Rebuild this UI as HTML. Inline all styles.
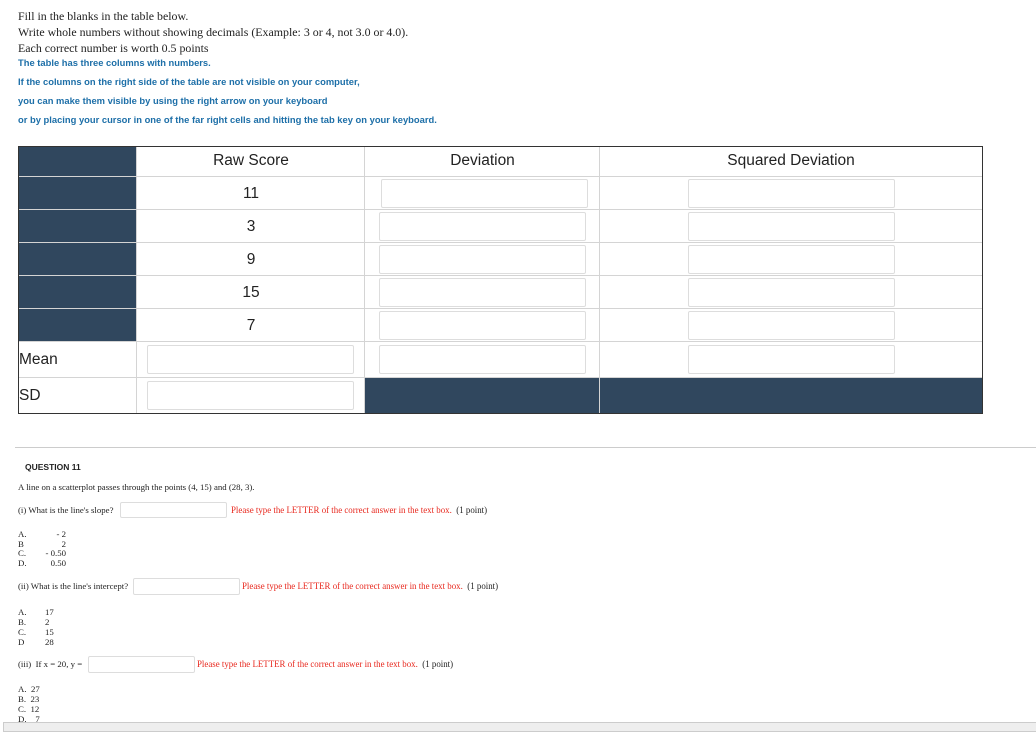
<!DOCTYPE html>
<html><head><meta charset="utf-8"><style>
body{margin:0;width:1036px;height:730px;position:relative;background:#fff;overflow:hidden;font-family:"Liberation Serif",serif;color:#222}
.a{position:absolute;white-space:nowrap}
.s{font-size:11.9px}
.b{font-family:"Liberation Sans",sans-serif;font-weight:bold;font-size:9.4px;color:#1d6fa8}
.c{position:absolute;box-sizing:border-box;border-right:1px solid #d4d4d4;border-bottom:1px solid #d4d4d4}
.d{background:#30475e}
.t{font-family:"Liberation Sans",sans-serif;font-size:15.5px;color:#222}
.i{position:absolute;box-sizing:border-box;border:1px solid #ddd;border-radius:2px;background:#fff}
.r{color:#e8281e;font-size:8.9px}
.q{font-size:8.8px}
</style></head><body>
<div class="a s" style="left:18px;top:9px">Fill in the blanks in the table below.</div>
<div class="a s" style="left:18px;top:25px">Write whole numbers without showing decimals (Example: 3 or 4, not 3.0 or 4.0).</div>
<div class="a s" style="left:18px;top:41px">Each correct number is worth 0.5 points</div>
<div class="a b" style="left:18px;top:57px">The table has three columns with numbers.</div>
<div class="a b" style="left:18px;top:76px">If the columns on the right side of the table are not visible on your computer,</div>
<div class="a b" style="left:18px;top:95px">you can make them visible by using the right arrow on your keyboard</div>
<div class="a b" style="left:18px;top:114px">or by placing your cursor in one of the far right cells and hitting the tab key on your keyboard.</div>

<div style="position:absolute;left:18px;top:146px;width:965px;height:268px;box-sizing:border-box;border:1px solid #333"></div>
<div class="c d" style="left:19px;top:147px;width:118px;height:30px"></div>
<div class="c d" style="left:19px;top:177px;width:118px;height:33px"></div>
<div class="c d" style="left:19px;top:210px;width:118px;height:33px"></div>
<div class="c d" style="left:19px;top:243px;width:118px;height:33px"></div>
<div class="c d" style="left:19px;top:276px;width:118px;height:33px"></div>
<div class="c d" style="left:19px;top:309px;width:118px;height:33px"></div>
<div class="c t" style="left:19px;top:342px;width:118px;height:36px;line-height:36px">Mean</div>
<div class="c t" style="left:19px;top:378px;width:118px;height:35px;line-height:35px;border-bottom:0">SD</div>
<div class="c" style="left:137px;top:147px;width:228px;height:266px;border-bottom:0"></div>
<div class="c" style="left:365px;top:147px;width:235px;height:266px;border-bottom:0"></div>
<div style="position:absolute;left:137px;top:176px;width:845px;height:1px;background:#d4d4d4"></div>
<div style="position:absolute;left:137px;top:209px;width:845px;height:1px;background:#d4d4d4"></div>
<div style="position:absolute;left:137px;top:242px;width:845px;height:1px;background:#d4d4d4"></div>
<div style="position:absolute;left:137px;top:275px;width:845px;height:1px;background:#d4d4d4"></div>
<div style="position:absolute;left:137px;top:308px;width:845px;height:1px;background:#d4d4d4"></div>
<div style="position:absolute;left:137px;top:341px;width:845px;height:1px;background:#d4d4d4"></div>
<div style="position:absolute;left:137px;top:377px;width:845px;height:1px;background:#d4d4d4"></div>
<div class="d" style="position:absolute;left:365px;top:378px;width:234px;height:35px"></div>
<div class="d" style="position:absolute;left:600px;top:378px;width:382px;height:35px"></div>
<div class="a t" style="left:137px;width:228px;text-align:center;top:152px">Raw Score</div>
<div class="a t" style="left:365px;width:235px;text-align:center;top:152px">Deviation</div>
<div class="a t" style="left:600px;width:382px;text-align:center;top:152px">Squared Deviation</div>
<div class="a t" style="left:137px;width:228px;text-align:center;top:185px">11</div>
<div class="a t" style="left:137px;width:228px;text-align:center;top:218px">3</div>
<div class="a t" style="left:137px;width:228px;text-align:center;top:251px">9</div>
<div class="a t" style="left:137px;width:228px;text-align:center;top:284px">15</div>
<div class="a t" style="left:137px;width:228px;text-align:center;top:317px">7</div>
<div class="i" style="left:381px;top:179px;width:207px;height:29px"></div>
<div class="i" style="left:379px;top:212px;width:207px;height:29px"></div>
<div class="i" style="left:379px;top:245px;width:207px;height:29px"></div>
<div class="i" style="left:379px;top:278px;width:207px;height:29px"></div>
<div class="i" style="left:379px;top:311px;width:207px;height:29px"></div>
<div class="i" style="left:379px;top:345px;width:207px;height:29px"></div>
<div class="i" style="left:688px;top:179px;width:207px;height:29px"></div>
<div class="i" style="left:688px;top:212px;width:207px;height:29px"></div>
<div class="i" style="left:688px;top:245px;width:207px;height:29px"></div>
<div class="i" style="left:688px;top:278px;width:207px;height:29px"></div>
<div class="i" style="left:688px;top:311px;width:207px;height:29px"></div>
<div class="i" style="left:688px;top:345px;width:207px;height:29px"></div>
<div class="i" style="left:147px;top:345px;width:207px;height:29px"></div>
<div class="i" style="left:147px;top:381px;width:207px;height:29px"></div>

<div style="position:absolute;left:15px;top:447px;width:1021px;height:1px;background:#ccc"></div>
<div class="a" style="left:25px;top:462px;font-family:'Liberation Sans',sans-serif;font-weight:bold;font-size:8.5px;color:#222">QUESTION 11</div>
<div class="a q" style="left:18px;top:482px">A line on a scatterplot passes through the points (4, 15) and (28, 3).</div>
<div class="a q" style="left:18px;top:505px">(i) What is the line's slope?</div>
<div class="i" style="left:120px;top:502px;width:107px;height:16px"></div>
<div class="a r" style="left:231px;top:505px">Please type the LETTER of the correct answer in the text box. <span style="color:#222">&nbsp;(1 point)</span></div>
<div class="a q" style="left:18px;top:530px;line-height:9.6px">A.<br>B<br>C.<br>D.</div>
<div class="a q" style="left:42px;top:530px;line-height:9.6px;text-align:right;width:24px">- 2<br>2<br>- 0.50<br>0.50</div>
<div class="a q" style="left:18px;top:581px">(ii) What is the line's intercept?</div>
<div class="i" style="left:133px;top:578px;width:107px;height:17px"></div>
<div class="a r" style="left:242px;top:581px">Please type the LETTER of the correct answer in the text box. <span style="color:#222">&nbsp;(1 point)</span></div>
<div class="a q" style="left:18px;top:607px;line-height:10px">A.<br>B.<br>C.<br>D</div>
<div class="a q" style="left:45px;top:607px;line-height:10px">17<br>2<br>15<br>28</div>
<div class="a q" style="left:18px;top:659px">(iii) &nbsp;If x = 20, y =</div>
<div class="i" style="left:88px;top:656px;width:107px;height:17px"></div>
<div class="a r" style="left:197px;top:659px">Please type the LETTER of the correct answer in the text box. <span style="color:#222">&nbsp;(1 point)</span></div>
<div class="a q" style="left:18px;top:684px;line-height:10px">A.&nbsp; 27<br>B.&nbsp; 23<br>C.&nbsp; 12<br>D.&nbsp;&nbsp;&nbsp; 7</div>
<div style="position:absolute;left:3px;top:722px;width:1040px;height:10px;background:#eee;border:1px solid #ccc;box-sizing:border-box"></div>
</body></html>
